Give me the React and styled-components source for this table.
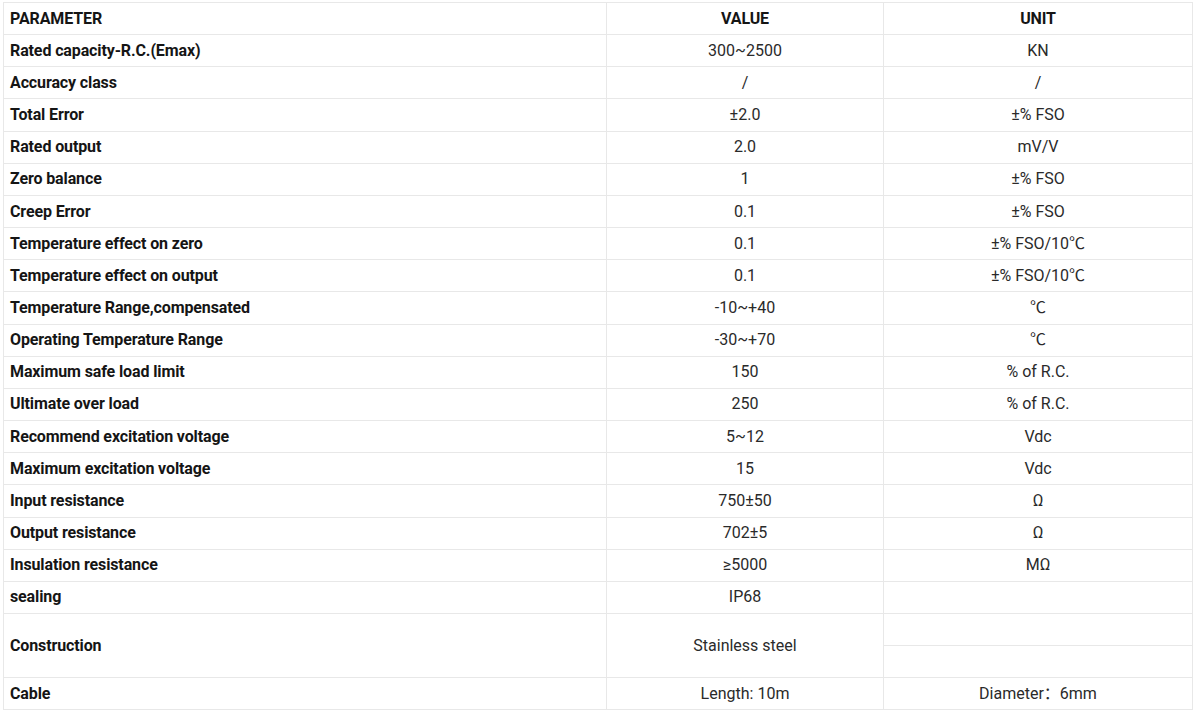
import React from 'react';
import styled, { createGlobalStyle } from 'styled-components';

const GlobalStyle = createGlobalStyle`
	html, body {
		margin: 0;
		padding: 0;
		background: #fff;
	}
	body {
		font-family: Roboto, "Noto Sans CJK SC", "Liberation Sans", Arial, sans-serif;
	}
`;

const Page = styled.div`
	padding: 2px 3px;
`;

const SpecTable = styled.table`
	width: 1189px;
	border-collapse: collapse;
	table-layout: fixed;
	font-size: 16px;
	color: #222;
`;

const Cell = styled.td`
	border: 1px solid #e8e8e8;
	height: 31.16px;
	padding: 0 6px;
	text-align: ${props => props.head ? 'left' : 'center'};
	font-weight: ${props => props.bold ? 700 : 400};
	color: ${props => props.bold ? '#151515' : '#2a2a2a'};
	vertical-align: middle;
	line-height: 20px;
	white-space: nowrap;
	letter-spacing: ${props => props.bold ? '-0.12px' : '0'};
`;

const rows = [
	['Rated capacity-R.C.(Emax)', '300~2500', 'KN'],
	['Accuracy class', '/', '/'],
	['Total Error', '±2.0', '±% FSO'],
	['Rated output', '2.0', 'mV/V'],
	['Zero balance', '1', '±% FSO'],
	['Creep Error', '0.1', '±% FSO'],
	['Temperature effect on zero', '0.1', '±% FSO/10℃'],
	['Temperature effect on output', '0.1', '±% FSO/10℃'],
	['Temperature Range,compensated', '-10~+40', '℃'],
	['Operating Temperature Range', '-30~+70', '℃'],
	['Maximum safe load limit', '150', '% of R.C.'],
	['Ultimate over load', '250', '% of R.C.'],
	['Recommend excitation voltage', '5~12', 'Vdc'],
	['Maximum excitation voltage', '15', 'Vdc'],
	['Input resistance', '750±50', 'Ω'],
	['Output resistance', '702±5', 'Ω'],
	['Insulation resistance', '≥5000', 'MΩ'],
	['sealing', 'IP68', ''],
];

export default function App() {
	return (
		<Page>
			<GlobalStyle />
			<SpecTable>
				<colgroup>
					<col style={{ width: 603 }} />
					<col style={{ width: 277 }} />
					<col style={{ width: 309 }} />
				</colgroup>
				<tbody>
					<tr>
						<Cell head bold>PARAMETER</Cell>
						<Cell bold>VALUE</Cell>
						<Cell bold>UNIT</Cell>
					</tr>
					{rows.map(([name, value, unit]) => (
						<tr key={name}>
							<Cell head bold>{name}</Cell>
							<Cell>{value}</Cell>
							<Cell>{unit}</Cell>
						</tr>
					))}
					<tr>
						<Cell head bold rowSpan={2}>Construction</Cell>
						<Cell rowSpan={2}>Stainless steel</Cell>
						<Cell></Cell>
					</tr>
					<tr>
						<Cell></Cell>
					</tr>
					<tr>
						<Cell head bold>Cable</Cell>
						<Cell>Length: 10m</Cell>
						<Cell>Diameter：6mm</Cell>
					</tr>
				</tbody>
			</SpecTable>
		</Page>
	);
}
